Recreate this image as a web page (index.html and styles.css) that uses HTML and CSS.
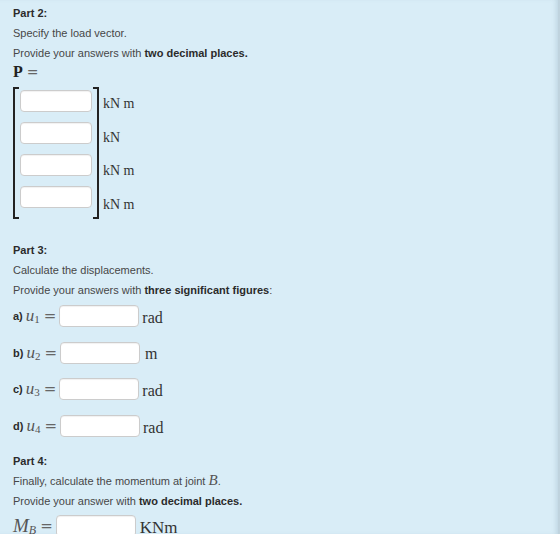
FILE: index.html
```html
<!DOCTYPE html>
<html lang="en">
<head>
<meta charset="utf-8">
<title>Stiffness method – parts 2 to 4</title>
<link rel="stylesheet" href="styles.css">
</head>
<body>
<div class="panel">
  <section class="part part-2">
    <p class="heading">Part 2:</p>
    <p>Specify the load vector.</p>
    <p>Provide your answers with <b>two decimal places.</b></p>
    <p class="math-line"><span class="mbold">P</span><span class="eq">=</span></p>
    <div class="matrix">
      <span class="bracket left"></span>
      <div class="cells">
        <input class="field" type="text">
        <input class="field" type="text">
        <input class="field" type="text">
        <input class="field" type="text">
      </div>
      <span class="bracket right"></span>
      <div class="units">
        <span>kN m</span>
        <span>kN</span>
        <span>kN m</span>
        <span>kN m</span>
      </div>
    </div>
  </section>

  <section class="part part-3">
    <p class="heading">Part 3:</p>
    <p>Calculate the displacements.</p>
    <p>Provide your answers with <b>three significant figures</b>:</p>
    <div class="answers">
      <div class="answer"><b>a)</b> <span class="mvar">u<sub>1</sub></span><span class="eq">=</span><input class="field wide" type="text"><span class="unit">rad</span></div>
      <div class="answer"><b>b)</b> <span class="mvar">u<sub>2</sub></span><span class="eq">=</span><input class="field wide" type="text"><span class="unit unit-m">m</span></div>
      <div class="answer"><b>c)</b> <span class="mvar">u<sub>3</sub></span><span class="eq">=</span><input class="field wide" type="text"><span class="unit">rad</span></div>
      <div class="answer"><b>d)</b> <span class="mvar">u<sub>4</sub></span><span class="eq">=</span><input class="field wide" type="text"><span class="unit">rad</span></div>
    </div>
  </section>

  <section class="part part-4">
    <p class="heading">Part 4:</p>
    <p>Finally, calculate the momentum at joint <span class="mvar inline">B</span>.</p>
    <p>Provide your answer with <b>two decimal places.</b></p>
    <div class="answer final"><span class="mvar big">M<sub>B</sub></span><span class="eq">=</span><input class="field wide" type="text"><span class="unit big-unit">KNm</span></div>
  </section>
</div>
</body>
</html>
```

FILE: styles.css
```css
html, body {
  margin: 0;
  padding: 0;
  height: 100%;
  overflow: hidden;
}

body {
  background: #d9edf7;
  font-family: "Liberation Sans", Arial, sans-serif;
  font-size: 11px;
  color: #474747;
}

.panel {
  box-sizing: border-box;
  height: 100%;
  padding: 3px 0 0 13px;
  border-right: 2px solid #bfd3de;
  box-shadow: inset -4px 0 4px -2px rgba(120, 150, 170, 0.25);
}

p {
  margin: 0;
  line-height: 20px;
}

b, .heading {
  font-weight: bold;
  color: #2b2b2b;
}

.math-line {
  margin-top: -1px;
  font-family: "Liberation Serif", "Times New Roman", serif;
  font-size: 16px;
}

.mbold {
  font-weight: bold;
  color: #222;
}

.eq {
  font-family: "DejaVu Serif", "Liberation Serif", serif;
  color: #666;
  font-size: 14px;
  margin: 0 0 0 4px;
}

/* bracketed column vector of inputs */
.matrix {
  display: flex;
  align-items: stretch;
  margin-top: 5px;
  height: 132px;
}

.bracket {
  box-sizing: border-box;
  width: 6px;
  border: 2px solid #222;
}

.bracket.left {
  border-right: none;
}

.bracket.right {
  border-left: none;
  margin-left: 1px;
}

.cells {
  display: flex;
  flex-direction: column;
  gap: 10px;
  padding: 3px 0 0 1px;
}

.field {
  box-sizing: border-box;
  height: 22px;
  width: 72px;
  margin: 0;
  padding: 0 6px;
  border: 1px solid #ccc;
  border-radius: 4px;
  background: #fff;
  box-shadow: inset 0 1px 1px rgba(0, 0, 0, 0.06);
  font: inherit;
}

.field.wide {
  width: 80px;
}

.units {
  display: flex;
  flex-direction: column;
  margin: 0 0 0 4px;
  font-family: "Liberation Serif", "Times New Roman", serif;
  font-size: 14px;
  color: #333;
}

.units span {
  height: 33.5px;
  line-height: 33.5px;
}

.part-3 {
  margin-top: 21px;
}

.answers {
  display: flex;
  flex-direction: column;
  gap: 14.7px;
  margin-top: 5px;
}

.answer {
  display: flex;
  align-items: center;
  height: 22px;
}

.answer b {
  margin-right: 3px;
}

.mvar {
  font-family: "Liberation Serif", "Times New Roman", serif;
  font-style: italic;
  font-size: 17px;
  color: #555;
}

.mvar sub {
  font-style: normal;
  font-size: 11px;
  vertical-align: -2px;
  line-height: 0;
}

.mvar.inline {
  font-size: 15px;
  line-height: 0;
}

.mvar.big {
  font-size: 19px;
}

.mvar.big sub {
  font-style: italic;
  font-size: 12px;
}

.answer .eq {
  font-size: 15px;
  margin: 0 3px 0 4px;
}

.unit {
  font-family: "Liberation Serif", "Times New Roman", serif;
  font-size: 16px;
  color: #333;
  margin-left: 3px;
  padding-top: 3px;
}

.unit-m {
  margin-left: 5px;
}

.part-4 {
  margin-top: 14px;
}

.answer.final {
  margin-top: 4px;
}

.big-unit {
  font-size: 17px;
  margin-left: 4px;
}
```
